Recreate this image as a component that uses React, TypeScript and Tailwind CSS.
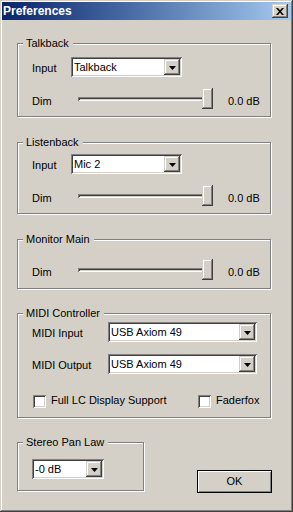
import type { ReactNode } from 'react';
import clsx from 'clsx';

const raised =
  'bg-[#D4D0C8] shadow-[inset_-1px_-1px_#404040,inset_1px_1px_#D4D0C8,inset_-2px_-2px_#808080,inset_2px_2px_#ffffff]';
const sunken =
  'bg-white shadow-[inset_1px_1px_#808080,inset_-1px_-1px_#ffffff,inset_2px_2px_#404040,inset_-2px_-2px_#D4D0C8]';

function GroupBox({ title, className, children }: { title: string; className?: string; children: ReactNode }) {
  return (
    <div className={clsx('relative border border-[#808080] shadow-[1px_1px_0_#ffffff,inset_1px_1px_0_#ffffff]', className)}>
      <span className="absolute -top-[7px] left-[5px] bg-[#D4D0C8] pl-[3px] pr-[4px] leading-[13px]">{title}</span>
      {children}
    </div>
  );
}

function ArrowDown() {
  return (
    <svg width="7" height="4" viewBox="0 0 7 4">
      <polygon points="0,0 7,0 3.5,4" fill="#000" />
    </svg>
  );
}

function Select({ value, className }: { value: string; className?: string }) {
  return (
    <div className={clsx('flex h-[20px] items-center p-[2px]', sunken, className)}>
      <span className="flex-1 truncate pl-[1px] leading-[16px]">{value}</span>
      <div className={clsx('flex h-[16px] w-[16px] items-center justify-center pt-[1px]', raised)}>
        <ArrowDown />
      </div>
    </div>
  );
}

function Slider() {
  return (
    <div className="flex h-[21px] w-[135px] items-center">
      <div className={clsx('h-[4px] flex-1', sunken, 'bg-[#D4D0C8]')} />
      <div className={clsx('-ml-[6px] h-[21px] w-[11px]', raised)} />
    </div>
  );
}

function DimRow({ className }: { className?: string }) {
  return (
    <div className={clsx('flex h-[21px] items-center pl-[14px]', className)}>
      <span className="w-[46px] pt-[6px]">Dim</span>
      <Slider />
      <span className="ml-[15px] pt-[6px]">0.0 dB</span>
    </div>
  );
}

function InputRow({ value, className }: { value: string; className?: string }) {
  return (
    <div className={clsx('flex items-center pl-[14px]', className)}>
      <span className="w-[39px] pt-[2px]">Input</span>
      <Select value={value} className="w-[111px]" />
    </div>
  );
}

function Checkbox({ label, className }: { label: string; className?: string }) {
  return (
    <div className={clsx('flex items-center', className)}>
      <div className={clsx('h-[13px] w-[13px]', sunken)} />
      <span className="ml-[5px] pb-[2px]">{label}</span>
    </div>
  );
}

export default function App() {
  return (
    <div className="flex h-[512px] w-[293px] flex-col bg-[#D4D0C8] p-[2px] font-['Liberation_Sans',Arial,sans-serif] text-[11px] leading-[13px] text-black shadow-[inset_-1px_-1px_#404040,inset_1px_1px_#D4D0C8,inset_-2px_-2px_#808080,inset_2px_2px_#ffffff]">
      <div className="flex h-[18px] items-center bg-gradient-to-r from-[#0A246A] to-[#A6CAF0] pl-[1px]">
        <span className="flex-1 text-[12px] font-bold leading-[14px] text-white">Preferences</span>
        <div className={clsx('mr-[3px] flex h-[14px] w-[16px] items-center justify-center pr-[1px]', raised)}>
          <svg width="8" height="7" viewBox="0 0 8 7">
            <path d="M0 0h2l2 2.3L6 0h2L5 3.5 8 7H6L4 4.7 2 7H0l3-3.5z" fill="#000" />
          </svg>
        </div>
      </div>

      <GroupBox title="Talkback" className="ml-[15px] mt-[23px] h-[74px] w-[254px]">
        <InputRow value="Talkback" className="mt-[13px]" />
        <DimRow className="mt-[11px]" />
      </GroupBox>

      <GroupBox title="Listenback" className="ml-[15px] mt-[25px] h-[72px] w-[254px]">
        <InputRow value="Mic 2" className="mt-[11px]" />
        <DimRow className="mt-[11px]" />
      </GroupBox>

      <GroupBox title="Monitor Main" className="ml-[15px] mt-[25px] h-[50px] w-[254px]">
        <DimRow className="mt-[19px]" />
      </GroupBox>

      <GroupBox title="MIDI Controller" className="ml-[15px] mt-[24px] h-[105px] w-[254px]">
        <div className="mt-[8px] flex items-center pl-[14px]">
          <span className="w-[76px] pt-[3px]">MIDI Input</span>
          <Select value="USB Axiom 49" className="w-[149px]" />
        </div>
        <div className="mt-[12px] flex items-center pl-[14px]">
          <span className="w-[76px] pt-[3px]">MIDI Output</span>
          <Select value="USB Axiom 49" className="w-[149px]" />
        </div>
        <div className="mt-[20px] flex items-center pl-[15px]">
          <Checkbox label="Full LC Display Support" className="w-[165px]" />
          <Checkbox label="Faderfox" />
        </div>
      </GroupBox>

      <div className="mt-[24px] flex items-start">
        <GroupBox title="Stereo Pan Law" className="ml-[15px] h-[49px] w-[127px]">
          <Select value="-0 dB" className="ml-[14px] mt-[16px] w-[72px]" />
        </GroupBox>
        <button className="ml-auto mr-[19px] mt-[28px] flex h-[23px] w-[75px] items-center justify-center border border-black bg-[#D4D0C8] shadow-[inset_1px_1px_#ffffff,inset_-1px_-1px_#808080] pb-[1px]">
          OK
        </button>
      </div>
    </div>
  );
}
